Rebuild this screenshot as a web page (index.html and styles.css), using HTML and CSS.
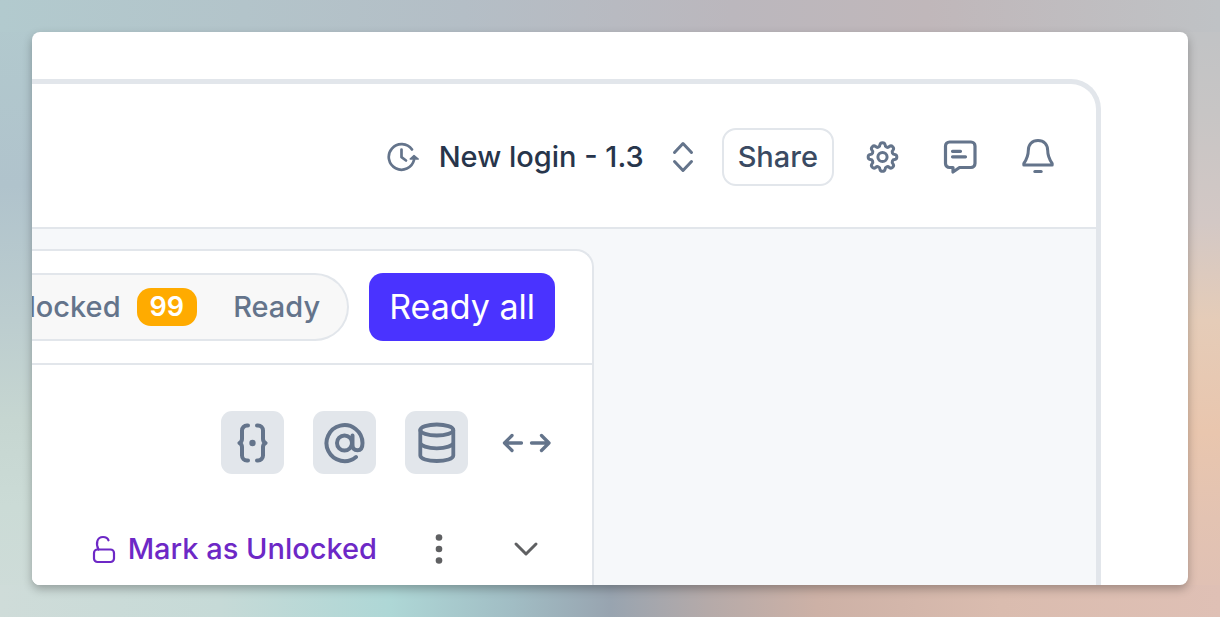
FILE: index.html
```html
<!DOCTYPE html>
<html lang="en">
<head>
<meta charset="utf-8">
<title>New login</title>
<link rel="stylesheet" href="styles.css">
</head>
<body>
<main class="card">
  <div class="frame">
    <header class="topbar">
      <button class="version" type="button">
        <svg class="icon" width="32" height="32" viewBox="0 0 32 32" stroke-width="2.7">
          <path d="M25 8.5A12.8 12.8 0 1 0 27 19"/>
          <path d="M14.5 8.5v7.7l4.5 3.3"/>
          <path class="solid" stroke-width="1.5" d="M23.2 18 27 14.5l4.2 3.5z"/>
        </svg>
        <span>New login - 1.3</span>
        <svg class="icon" width="22" height="32" viewBox="0 0 22 32" stroke-width="3">
          <path d="m2.5 11.5 8.5-9 8.5 9M2.5 20.5l8.500 9 8.500-9"/>
        </svg>
      </button>
      <button class="share" type="button">Share</button>
      <nav class="actions">
        <button type="button" aria-label="Settings">
          <svg class="icon" width="34" height="36" viewBox="-17.500 -18 34 36" stroke-width="3">
            <path d="M-2.600-12.200A2.650 2.650 0 0 1 2.600-12.200A2.400 2.400 0 0 0 6.800-10.500A2.650 2.650 0 0 1 10.500-6.800A2.400 2.400 0 0 0 12.200-2.600A2.650 2.650 0 0 1 12.200 2.600A2.400 2.400 0 0 0 10.500 6.800A2.650 2.650 0 0 1 6.800 10.500A2.400 2.400 0 0 0 2.600 12.200A2.650 2.650 0 0 1-2.600 12.200A2.400 2.400 0 0 0-6.800 10.500A2.650 2.650 0 0 1-10.500 6.800A2.400 2.400 0 0 0-12.200 2.600A2.650 2.650 0 0 1-12.200-2.600A2.400 2.400 0 0 0-10.500-6.800A2.650 2.650 0 0 1-6.800-10.500A2.400 2.400 0 0 0-2.600-12.200Z"/>
            <circle r="4.600"/>
          </svg>
        </button>
        <button type="button" aria-label="Comments">
          <svg class="icon" width="34" height="36" viewBox="0 0 34 36" stroke-width="3.2">
            <path d="M6.500 3H28a4 4 0 0 1 4 4V24.500a4 4 0 0 1-4 4H16.500L10 33V28.500H6.500a4 4 0 0 1-4-4V7a4 4 0 0 1 4-4Z"/>
            <path d="M9.500 12.300h8M9.500 17.800h13"/>
          </svg>
        </button>
        <button type="button" aria-label="Notifications">
          <svg class="icon" width="34" height="36" viewBox="0 1 34 36" stroke-width="3">
            <path d="M17 2.500C11 2.500 7.300 6.700 7.300 12.500C7.300 19 5.200 22 2.800 25.500V27H31.200V25.500C28.800 22 26.700 19 26.700 12.500C26.700 6.700 23 2.500 17 2.500Z"/>
            <path d="M13.800 33.500h6.400"/>
          </svg>
        </button>
      </nav>
    </header>
    <div class="workspace">
      <section class="panel">
        <div class="panel-head">
          <div class="tabs">
            <button type="button">locked <span class="badge">99</span></button>
            <button type="button">Ready</button>
          </div>
          <button class="ready-all" type="button">Ready all</button>
        </div>
        <div class="tools">
          <button class="tile" type="button" aria-label="Variables">
            <svg class="icon" width="42" height="42" viewBox="0 0 42 42" stroke-width="4">
              <path d="M16 3.500h-1a5 5 0 0 0-5 5v8.500c0 2-.500 3-2.500 4 2 1 2.500 2 2.500 4v8.500a5 5 0 0 0 5 5h1M25 3.500h1a5 5 0 0 1 5 5v8.500c0 2 .5 3 2.500 4-2 1-2.500 2-2.500 4v8.500a5 5 0 0 1-5 5h-1"/>
              <circle class="solid" stroke="none" cx="20.500" cy="21" r="3.200"/>
            </svg>
          </button>
          <button class="tile" type="button" aria-label="Mentions">
            <svg class="icon" width="42" height="42" viewBox="0 0 42 42" stroke-width="4">
              <circle cx="20.500" cy="21" r="7.500"/>
              <path d="M28.500 13.500v9.500c0 4 2 5.300 5 5.300 4 0 5-3 5-7.300A18 18 0 1 0 32 35"/>
            </svg>
          </button>
          <button class="tile" type="button" aria-label="Database">
            <svg class="icon" width="42" height="42" viewBox="0 0 42 42" stroke-width="3.800">
              <ellipse cx="20.800" cy="8" rx="16.500" ry="5.500"/>
              <path d="M4.300 8v25.500c0 3.200 7.400 5.500 16.500 5.500s16.500-2.300 16.500-5.500V8M4.300 20.500c0 3.200 7.400 5.800 16.500 5.800s16.500-2.600 16.500-5.800"/>
            </svg>
          </button>
          <button class="expand" type="button" aria-label="Expand width">
            <svg class="icon" width="50" height="22" viewBox="0 0 50 22" stroke-width="3.300">
              <path d="M19.500 11H3M10 3.500 2.500 11l7.500 7.500M29.500 11h17M39.500 3.500l7.500 7.500-7.500 7.500"/>
            </svg>
          </button>
        </div>
        <div class="status">
          <button class="unlock" type="button">
            <svg class="icon" width="26" height="30" viewBox="0 0 26 30" stroke-width="2.200">
              <rect x="3" y="15.500" width="20" height="12.500" rx="3.500"/>
              <path d="M7.500 15.500C4.500 9.500 6 3 12 3c3 0 4.800 1.200 5.500 3.300"/>
            </svg>
            <span>Mark as Unlocked</span>
          </button>
          <button class="plain" type="button" aria-label="More">
            <svg class="icon" width="10" height="32" viewBox="0 0 10 32">
              <g class="solid" stroke="none"><circle cx="5" cy="4.500" r="3.300"/><circle cx="5" cy="16" r="3.300"/><circle cx="5" cy="27.500" r="3.300"/></g>
            </svg>
          </button>
          <button class="plain" type="button" aria-label="Expand">
            <svg class="icon" width="26" height="16" viewBox="0 0 26 16" stroke-width="3">
              <path d="m3 3 10 10L23 3"/>
            </svg>
          </button>
        </div>
      </section>
    </div>
  </div>
</main>
</body>
</html>
```
FILE: styles.css
```css
* { box-sizing: border-box; }

body {
  margin: 0;
  min-height: 100vh;
  padding: 32px;
  display: flex;
  font-family: Inter, "Liberation Sans", sans-serif;
  font-size: 29px;
  line-height: 36px;
  color: #64748b;
  background:
    linear-gradient(90deg, #b2cace 0%, #b3c4ca 20%, #b4bec6 38%, #bbb7bd 60%, #c0b7ba 76%, #bfc2c5 100%) top / 100% 32px no-repeat,
    linear-gradient(90deg, #cfdcd9 0%, #c6dad7 18%, #aed7d6 32%, #a1bdc4 42%, #98a4b0 50%, #b5aaa9 58%, #cdb1a6 67%, #dabcaf 82%, #dfc0b5 100%) bottom / 100% 32px no-repeat,
    linear-gradient(180deg, #b2cace 0%, #b0c3cc 30%, #bccdcf 52%, #c6d6d1 68%, #cbdbd6 82%, #cfdcd9 100%) left / 50% 100% no-repeat,
    linear-gradient(180deg, #bfc2c5 0%, #c7c5c5 18%, #d3c8c5 36%, #e5ccb8 52%, #e9c6ae 70%, #e3c3b2 84%, #dfc0b5 100%) right / 50% 100% no-repeat;
}

button {
  display: inline-flex;
  align-items: center;
  justify-content: center;
  margin: 0;
  padding: 0;
  border: 0;
  background: none;
  color: inherit;
  font: inherit;
  white-space: nowrap;
  cursor: pointer;
}

.icon {
  display: block;
  flex: none;
  fill: none;
  stroke: currentColor;
  stroke-linecap: round;
  stroke-linejoin: round;
}

.solid { fill: currentColor; }

.card {
  flex: 1;
  display: flex;
  min-width: 0;
  padding: 47px 87px 0 0;
  overflow: hidden;
  border-radius: 8px;
  background: #fff;
  box-shadow: 0 4px 10px rgba(0, 0, 0, 0.28);
}

.frame {
  flex: 1;
  display: flex;
  flex-direction: column;
  min-width: 0;
  overflow: hidden;
  border: solid #e2e6eb;
  border-width: 5px 5px 0 0;
  border-top-right-radius: 30px;
}

.topbar {
  display: flex;
  align-items: center;
  justify-content: flex-end;
  padding: 44px 41px 41px 0;
  border-bottom: 2px solid #e2e6eb;
}

.version {
  gap: 20px;
  margin-right: 28px;
  color: #64748b;
  font-weight: 500;
}

.version span { color: #27354b; }
.version .icon:last-child { margin-left: 8px; }

.share {
  height: 58px;
  padding: 0 14px;
  border: 2px solid #e2e6eb;
  border-radius: 14px;
  color: #3a4a62;
  font-weight: 500;
}

.actions {
  display: flex;
  gap: 44px;
  margin-left: 31px;
}

.workspace {
  flex: 1;
  display: flex;
  padding-top: 20px;
  background: #f6f8fa;
}

.panel {
  width: 562px;
  overflow: hidden;
  border: solid #e2e6eb;
  border-width: 2px 2px 0 0;
  border-top-right-radius: 18px;
  background: #fff;
}

.panel-head {
  display: flex;
  align-items: center;
  justify-content: flex-end;
  gap: 20px;
  padding: 22px 37px 22px 0;
  border-bottom: 2px solid #e2e6eb;
}

.tabs {
  flex: 1;
  display: flex;
  align-items: center;
  justify-content: flex-end;
  gap: 36px;
  min-width: 0;
  height: 68px;
  padding-right: 27px;
  border: solid #e2e6eb;
  border-width: 2px 2px 2px 0;
  border-radius: 0 34px 34px 0;
  background: #f8f8f8;
  font-weight: 500;
}

.tabs button { gap: 16px; }

.badge {
  padding: 1px 13px;
  border-radius: 14px;
  background: #ffab00;
  color: #fff;
  font-size: 27px;
  font-weight: 600;
}

.ready-all {
  height: 68px;
  padding: 0 20px;
  border-radius: 14px;
  background: #4a33ff;
  color: #fff;
  font-size: 34px;
}

.tools {
  display: flex;
  align-items: center;
  justify-content: flex-end;
  gap: 29px;
  padding: 46px 40px 0 0;
}

.tile {
  width: 63px;
  height: 63px;
  border-radius: 11px;
  background: #e2e6eb;
}

.expand { margin-left: 5px; }

.status {
  display: flex;
  align-items: center;
  justify-content: flex-end;
  gap: 57px;
  padding: 57px 53px 18px 0;
}

.unlock {
  gap: 11px;
  color: #6d28c6;
  font-weight: 500;
}

.plain { color: #5f6062; }
.plain:last-child { margin-left: 12px; }
```
